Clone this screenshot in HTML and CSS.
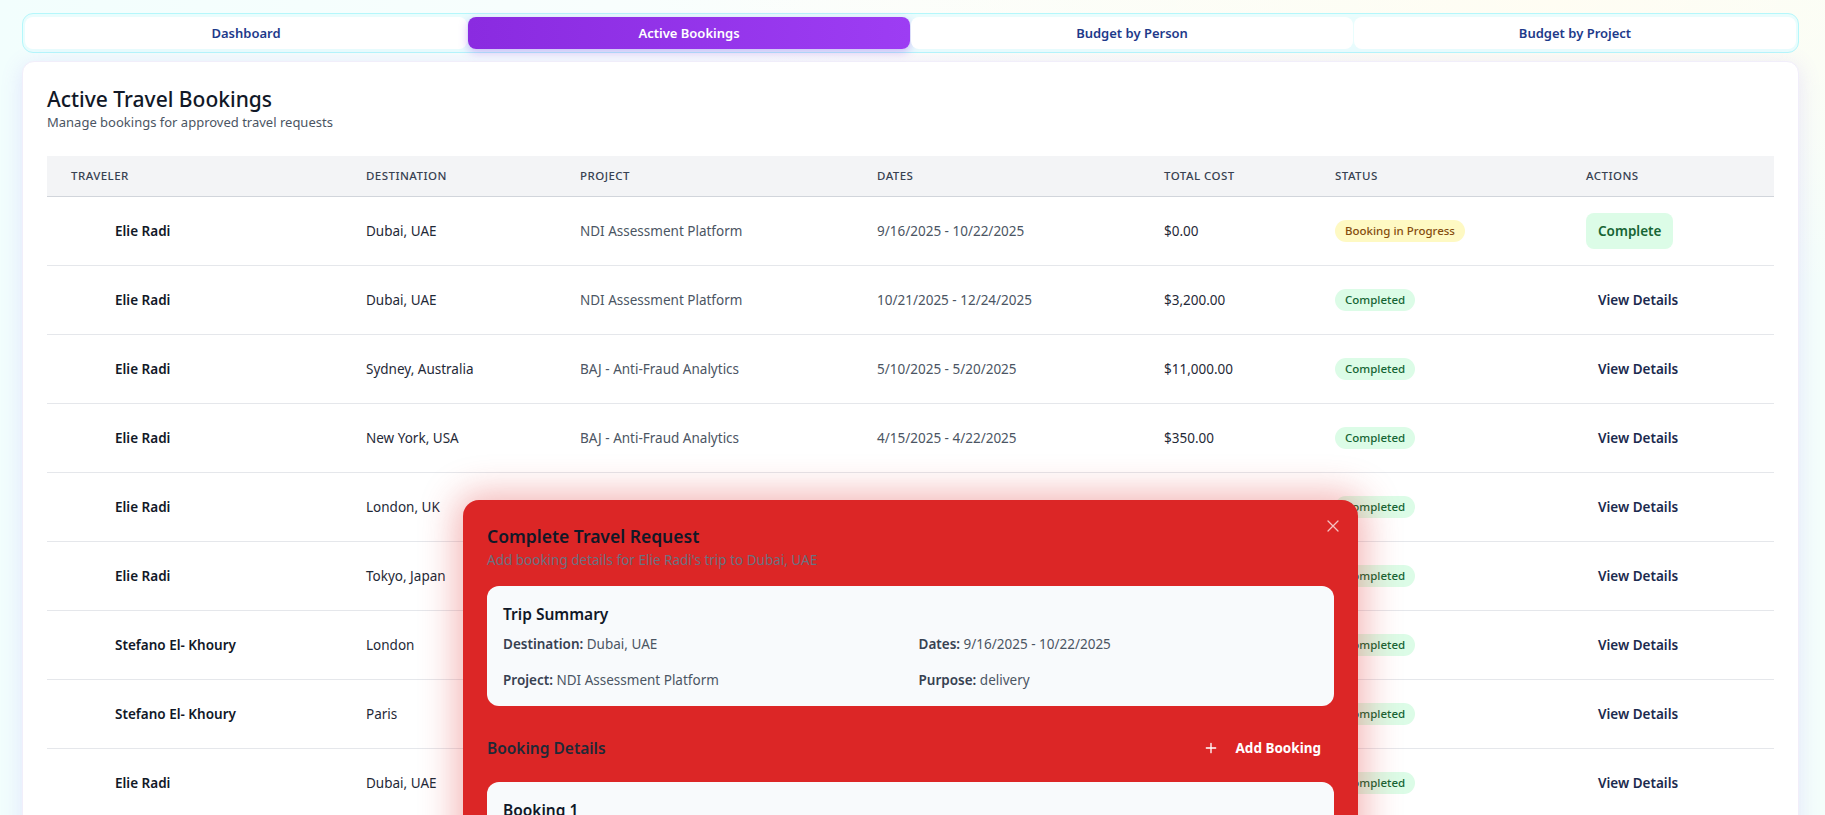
FILE: index.html
```html
<!DOCTYPE html>
<html lang="en">
<head>
<meta charset="utf-8">
<title>Active Travel Bookings</title>
<link rel="stylesheet" href="styles.css">
</head>
<body>
<div class="page">
  <nav class="tabs">
    <button class="tab">Dashboard</button>
    <button class="tab tab-active">Active Bookings</button>
    <button class="tab">Budget by Person</button>
    <button class="tab">Budget by Project</button>
  </nav>

  <section class="card">
    <h1 class="card-title">Active Travel Bookings</h1>
    <p class="card-sub">Manage bookings for approved travel requests</p>

    <table class="bookings">
      <colgroup>
        <col class="c-traveler"><col class="c-dest"><col class="c-proj"><col class="c-dates"><col class="c-cost"><col class="c-status"><col class="c-actions">
      </colgroup>
      <thead>
        <tr><th>Traveler</th><th>Destination</th><th>Project</th><th>Dates</th><th>Total Cost</th><th>Status</th><th>Actions</th></tr>
      </thead>
      <tbody>
        <tr>
          <td><div class="traveler"><span class="avatar"></span><span class="name">Elie Radi</span></div></td>
          <td class="dest">Dubai, UAE</td><td class="muted">NDI Assessment Platform</td><td class="muted">9/16/2025 - 10/22/2025</td><td class="cost">$0.00</td>
          <td><span class="badge badge-progress">Booking in Progress</span></td>
          <td><button class="btn-complete">Complete</button></td>
        </tr>
        <tr>
          <td><div class="traveler"><span class="avatar"></span><span class="name">Elie Radi</span></div></td>
          <td class="dest">Dubai, UAE</td><td class="muted">NDI Assessment Platform</td><td class="muted">10/21/2025 - 12/24/2025</td><td class="cost">$3,200.00</td>
          <td><span class="badge badge-done">Completed</span></td>
          <td><button class="btn-view">View Details</button></td>
        </tr>
        <tr>
          <td><div class="traveler"><span class="avatar"></span><span class="name">Elie Radi</span></div></td>
          <td class="dest">Sydney, Australia</td><td class="muted">BAJ - Anti-Fraud Analytics</td><td class="muted">5/10/2025 - 5/20/2025</td><td class="cost">$11,000.00</td>
          <td><span class="badge badge-done">Completed</span></td>
          <td><button class="btn-view">View Details</button></td>
        </tr>
        <tr>
          <td><div class="traveler"><span class="avatar"></span><span class="name">Elie Radi</span></div></td>
          <td class="dest">New York, USA</td><td class="muted">BAJ - Anti-Fraud Analytics</td><td class="muted">4/15/2025 - 4/22/2025</td><td class="cost">$350.00</td>
          <td><span class="badge badge-done">Completed</span></td>
          <td><button class="btn-view">View Details</button></td>
        </tr>
        <tr>
          <td><div class="traveler"><span class="avatar"></span><span class="name">Elie Radi</span></div></td>
          <td class="dest">London, UK</td><td class="muted">NDI Assessment Platform</td><td class="muted">3/02/2025 - 3/09/2025</td><td class="cost">$2,100.00</td>
          <td><span class="badge badge-done">Completed</span></td>
          <td><button class="btn-view">View Details</button></td>
        </tr>
        <tr>
          <td><div class="traveler"><span class="avatar"></span><span class="name">Elie Radi</span></div></td>
          <td class="dest">Tokyo, Japan</td><td class="muted">NDI Assessment Platform</td><td class="muted">2/10/2025 - 2/18/2025</td><td class="cost">$4,500.00</td>
          <td><span class="badge badge-done">Completed</span></td>
          <td><button class="btn-view">View Details</button></td>
        </tr>
        <tr>
          <td><div class="traveler"><span class="avatar"></span><span class="name">Stefano El- Khoury</span></div></td>
          <td class="dest">London</td><td class="muted">BAJ - Anti-Fraud Analytics</td><td class="muted">1/12/2025 - 1/16/2025</td><td class="cost">$1,800.00</td>
          <td><span class="badge badge-done">Completed</span></td>
          <td><button class="btn-view">View Details</button></td>
        </tr>
        <tr>
          <td><div class="traveler"><span class="avatar"></span><span class="name">Stefano El- Khoury</span></div></td>
          <td class="dest">Paris</td><td class="muted">BAJ - Anti-Fraud Analytics</td><td class="muted">12/03/2024 - 12/07/2024</td><td class="cost">$1,650.00</td>
          <td><span class="badge badge-done">Completed</span></td>
          <td><button class="btn-view">View Details</button></td>
        </tr>
        <tr>
          <td><div class="traveler"><span class="avatar"></span><span class="name">Elie Radi</span></div></td>
          <td class="dest">Dubai, UAE</td><td class="muted">NDI Assessment Platform</td><td class="muted">11/05/2024 - 11/12/2024</td><td class="cost">$2,900.00</td>
          <td><span class="badge badge-done">Completed</span></td>
          <td><button class="btn-view">View Details</button></td>
        </tr>
      </tbody>
    </table>
  </section>
</div>

<div class="modal" role="dialog">
  <button class="modal-close" aria-label="Close">
    <svg width="12" height="12" viewBox="0 0 12 12" fill="none" stroke="currentColor" stroke-width="1.3" stroke-linecap="round"><path d="M1 1L11 11M11 1L1 11"/></svg>
  </button>
  <h2 class="modal-title">Complete Travel Request</h2>
  <p class="modal-sub">Add booking details for Elie Radi's trip to Dubai, UAE</p>

  <div class="panel">
    <h3 class="panel-title">Trip Summary</h3>
    <div class="summary-grid">
      <p><b>Destination:</b> Dubai, UAE</p>
      <p><b>Dates:</b> 9/16/2025 - 10/22/2025</p>
      <p><b>Project:</b> NDI Assessment Platform</p>
      <p><b>Purpose:</b> delivery</p>
    </div>
  </div>

  <div class="section-head">
    <h3 class="section-title">Booking Details</h3>
    <button class="btn-add">
      <svg width="16" height="16" viewBox="0 0 24 24" fill="none" stroke="currentColor" stroke-width="2" stroke-linecap="round"><path d="M12 5v14M5 12h14"/></svg>
      <span>Add Booking</span>
    </button>
  </div>

  <div class="panel">
    <h3 class="panel-title">Booking 1</h3>
    <div class="summary-grid">
      <p><b>Type:</b> Flight</p>
      <p><b>Cost:</b> $0.00</p>
    </div>
  </div>
</div>
</body>
</html>
```

FILE: styles.css
```css
* { box-sizing: border-box; }

html, body {
  margin: 0;
  height: 100%;
  overflow: hidden;
}

body {
  position: relative;
  font-family: "Noto Sans", "Open Sans", sans-serif;
  color: #111827;
  background:
    radial-gradient(ellipse 900px 300px at 85% 0%, #fffdf3 0%, rgba(255,253,243,0) 100%),
    linear-gradient(90deg, #f2fefd 0%, #fbfefd 50%, #f4fefb 100%);
}

.page {
  padding: 13px 26px 0 22px;
}

/* Tabs */
.tabs {
  display: grid;
  grid-template-columns: repeat(4, 1fr);
  gap: 1px;
  padding: 3px 2px;
  height: 40px;
  border: 1px solid #b5f7fb;
  border-radius: 11px;
  background: #e9fdfd;
}

.tab {
  border: 0;
  border-radius: 8px;
  background: #ffffff;
  font-family: inherit;
  font-size: 13px;
  font-weight: 600;
  color: #1e3a8a;
  cursor: pointer;
}

.tab-active {
  background: linear-gradient(90deg, #8a2be0 0%, #9d3df3 100%);
  color: #ffffff;
  box-shadow: 0 3px 10px rgba(147, 51, 234, 0.35);
}

/* Card */
.card {
  margin-top: 8px;
  background: #ffffff;
  border: 1px solid #f1eefa;
  border-radius: 12px;
  padding: 24px;
  height: 900px;
  box-shadow: 0 4px 22px rgba(139, 92, 246, 0.16);
}

.card-title {
  margin: 0;
  font-size: 21px;
  line-height: 26px;
  font-weight: 500;
  color: #111827;
}

.card-sub {
  margin: 0;
  font-size: 13px;
  line-height: 20px;
  color: #4b5563;
}

/* Table */
.bookings {
  margin-top: 24px;
  width: 100%;
  table-layout: fixed;
  border-collapse: collapse;
}

.c-traveler { width: 295px; }
.c-dest { width: 214px; }
.c-proj { width: 297px; }
.c-dates { width: 287px; }
.c-cost { width: 171px; }
.c-status { width: 251px; }
.c-actions { width: 212px; }

.bookings thead tr {
  background: #f3f4f6;
  border-bottom: 1px solid #d1d5db;
}

.bookings th {
  padding: 12px 24px;
  text-align: left;
  font-size: 11.5px;
  line-height: 16px;
  font-weight: 500;
  letter-spacing: 0.04em;
  text-transform: uppercase;
  color: #374151;
}

.bookings td {
  padding: 16px 24px;
  font-size: 13.5px;
  line-height: 20px;
  font-weight: 400;
  vertical-align: middle;
  white-space: nowrap;
}

.bookings tbody tr {
  border-bottom: 1px solid #e5e7eb;
}

.traveler {
  display: flex;
  align-items: center;
  gap: 12px;
  height: 36px;
}

.avatar {
  width: 32px;
  height: 32px;
  flex-shrink: 0;
}

.name {
  font-weight: 600;
  color: #111827;
}

.dest { color: #1f2937; }
.muted { color: #4b5563; }
.cost { color: #1f2937; font-weight: 400; }

.badge {
  display: inline-block;
  padding: 0 10px;
  border-radius: 999px;
  font-size: 11.5px;
  line-height: 22px;
  font-weight: 500;
}

.badge-progress { background: #fef9c3; color: #854d0e; }
.badge-done { background: #dcfce7; color: #166534; }

.btn-complete,
.btn-view {
  border: 0;
  padding: 8px 12px;
  border-radius: 8px;
  font-family: inherit;
  font-size: 13.5px;
  line-height: 20px;
  font-weight: 600;
  cursor: pointer;
}

.btn-complete { background: #dcfce7; color: #166534; }
.btn-view { background: transparent; color: #1b2a4e; }

/* Modal */
.modal {
  position: absolute;
  left: 463px;
  top: 500px;
  width: 895px;
  padding: 22px 24px 24px;
  background: #dc2626;
  border-radius: 16px;
  box-shadow: 0 0 36px 6px rgba(220, 38, 38, 0.35);
  z-index: 10;
}

.modal-close {
  position: absolute;
  top: 20px;
  right: 19px;
  width: 12px;
  height: 12px;
  padding: 0;
  border: 0;
  background: transparent;
  color: rgba(255, 255, 255, 0.72);
  display: flex;
}

.modal-title {
  margin: 0;
  font-size: 17.5px;
  line-height: 28px;
  font-weight: 600;
  color: #111827;
}

.modal-sub {
  margin: 0;
  font-size: 13.5px;
  line-height: 20px;
  color: #6b7280;
}

.panel {
  margin-top: 16px;
  padding: 16px;
  background: #f8fafc;
  border-radius: 12px;
}

.panel-title {
  margin: 0;
  font-size: 15.5px;
  line-height: 24px;
  font-weight: 600;
  color: #111827;
}

.summary-grid {
  margin-top: 8px;
  display: grid;
  grid-template-columns: 1fr 1fr;
  gap: 16px;
}

.summary-grid p {
  margin: 0;
  font-size: 13.5px;
  line-height: 20px;
  color: #4b5563;
}

.summary-grid b {
  font-weight: 600;
  color: #374151;
}

.section-head {
  margin-top: 24px;
  display: flex;
  align-items: center;
  justify-content: space-between;
}

.section-title {
  margin: 0;
  font-size: 15.5px;
  line-height: 24px;
  font-weight: 600;
  color: #1f2937;
}

.btn-add {
  display: flex;
  align-items: center;
  gap: 17px;
  padding: 8px 13px 8px 12px;
  border: 0;
  background: transparent;
  color: #ffffff;
  font-family: inherit;
  font-size: 13.5px;
  line-height: 20px;
  font-weight: 700;
  cursor: pointer;
}
```
